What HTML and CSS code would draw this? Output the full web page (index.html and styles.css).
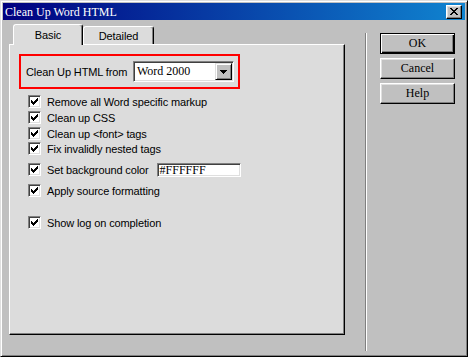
FILE: index.html
```html
<!DOCTYPE html>
<html>
<head>
<meta charset="utf-8">
<link rel="stylesheet" href="styles.css">
</head>
<body>
<div class="window">
  <div class="titlebar">
    <span class="title">Clean Up Word HTML</span>
    <button class="close"><svg width="8" height="7" viewBox="0 0 8 7" shape-rendering="crispEdges"><path d="M0 0h2v1H0zM6 0h2v1H6zM1 1h2v1H1zM5 1h2v1H5zM2 2h4v1H2zM3 3h2v1H3zM2 4h4v1H2zM1 5h2v1H1zM5 5h2v1H5zM0 6h2v1H0zM6 6h2v1H6z" fill="#000"/></svg></button>
  </div>
  <div class="body">
    <div class="left">
      <div class="tabs">
        <div class="tab tab-basic active">Basic</div>
        <div class="tab tab-detailed">Detailed</div>
      </div>
      <div class="panel">
        <div class="highlight">
          <span class="field-label">Clean Up HTML from</span>
          <div class="select">
            <span class="select-value">Word 2000</span>
            <span class="select-btn"><svg width="7" height="4" viewBox="0 0 7 4" shape-rendering="crispEdges"><path d="M0 0h7v1H0zM1 1h5v1H1zM2 2h3v1H2zM3 3h1v1H3z" fill="#000"/></svg></span>
          </div>
        </div>
        <ul class="options">
          <li class="option"><span class="check"><svg width="7" height="7" viewBox="0 0 7 7" shape-rendering="crispEdges"><path d="M6 0h1v1H6zM5 1h2v1H5zM0 2h1v1H0zM4 2h3v1H4zM0 3h2v1H0zM3 3h3v1H3zM0 4h5v1H0zM1 5h3v1H1zM2 6h1v1H2z" fill="#000"/></svg></span><span class="opt-label">Remove all Word specific markup</span></li>
          <li class="option gap-3"><span class="check"><svg width="7" height="7" viewBox="0 0 7 7" shape-rendering="crispEdges"><path d="M6 0h1v1H6zM5 1h2v1H5zM0 2h1v1H0zM4 2h3v1H4zM0 3h2v1H0zM3 3h3v1H3zM0 4h5v1H0zM1 5h3v1H1zM2 6h1v1H2z" fill="#000"/></svg></span><span class="opt-label">Clean up CSS</span></li>
          <li class="option gap-3"><span class="check"><svg width="7" height="7" viewBox="0 0 7 7" shape-rendering="crispEdges"><path d="M6 0h1v1H6zM5 1h2v1H5zM0 2h1v1H0zM4 2h3v1H4zM0 3h2v1H0zM3 3h3v1H3zM0 4h5v1H0zM1 5h3v1H1zM2 6h1v1H2z" fill="#000"/></svg></span><span class="opt-label">Clean up &lt;font&gt; tags</span></li>
          <li class="option gap-2"><span class="check"><svg width="7" height="7" viewBox="0 0 7 7" shape-rendering="crispEdges"><path d="M6 0h1v1H6zM5 1h2v1H5zM0 2h1v1H0zM4 2h3v1H4zM0 3h2v1H0zM3 3h3v1H3zM0 4h5v1H0zM1 5h3v1H1zM2 6h1v1H2z" fill="#000"/></svg></span><span class="opt-label">Fix invalidly nested tags</span></li>
          <li class="option gap-8"><span class="check"><svg width="7" height="7" viewBox="0 0 7 7" shape-rendering="crispEdges"><path d="M6 0h1v1H6zM5 1h2v1H5zM0 2h1v1H0zM4 2h3v1H4zM0 3h2v1H0zM3 3h3v1H3zM0 4h5v1H0zM1 5h3v1H1zM2 6h1v1H2z" fill="#000"/></svg></span><span class="opt-label">Set background color</span><span class="color-input">#FFFFFF</span></li>
          <li class="option gap-8"><span class="check"><svg width="7" height="7" viewBox="0 0 7 7" shape-rendering="crispEdges"><path d="M6 0h1v1H6zM5 1h2v1H5zM0 2h1v1H0zM4 2h3v1H4zM0 3h2v1H0zM3 3h3v1H3zM0 4h5v1H0zM1 5h3v1H1zM2 6h1v1H2z" fill="#000"/></svg></span><span class="opt-label">Apply source formatting</span></li>
          <li class="option gap-19"><span class="check"><svg width="7" height="7" viewBox="0 0 7 7" shape-rendering="crispEdges"><path d="M6 0h1v1H6zM5 1h2v1H5zM0 2h1v1H0zM4 2h3v1H4zM0 3h2v1H0zM3 3h3v1H3zM0 4h5v1H0zM1 5h3v1H1zM2 6h1v1H2z" fill="#000"/></svg></span><span class="opt-label">Show log on completion</span></li>
        </ul>
      </div>
    </div>
    <div class="separator"></div>
    <div class="buttons">
      <button class="btn default">OK</button>
      <button class="btn">Cancel</button>
      <button class="btn">Help</button>
    </div>
  </div>
</div>
</body>
</html>
```

FILE: styles.css
```css
* { box-sizing: border-box; }
html, body { margin: 0; padding: 0; }
body {
  background: #c0c0c0;
  font-family: "Liberation Sans", Arial, sans-serif;
  font-size: 11px;
  letter-spacing: -0.12px;
  color: #000;
}
.window {
  width: 468px;
  height: 357px;
  background: #c0c0c0;
  border: 1px solid;
  border-color: #dfdfdf #000 #000 #dfdfdf;
  box-shadow: inset 1px 1px #fff, inset -1px -1px #808080;
  padding: 2px;
  display: flex;
  flex-direction: column;
}
.titlebar {
  height: 17px;
  flex: none;
  background: linear-gradient(to right, #000080, #1084d0);
  display: flex;
  align-items: center;
  justify-content: space-between;
  padding: 0 3px 0 2px;
  color: #fff;
}
.title {
  font-family: "Liberation Serif", "Times New Roman", serif;
  font-size: 12px;
  letter-spacing: 0;
  line-height: 14px;
  white-space: nowrap;
}
.close {
  width: 16px;
  height: 14px;
  padding: 0;
  background: #c0c0c0;
  border: 1px solid;
  border-color: #fff #000 #000 #fff;
  box-shadow: inset -1px -1px #808080, inset 1px 1px #dfdfdf;
  display: flex;
  align-items: center;
  justify-content: center;
}
.close svg { display: block; }
.body {
  flex: 1;
  display: flex;
  align-items: flex-start;
  padding: 4px 0 0 6px;
}
.left { width: 336px; flex: none; }
.tabs {
  display: flex;
  align-items: flex-end;
  height: 20px;
  padding-left: 4px;
}
.tab {
  height: 18px;
  background: #dcdcdc;
  border: 1px solid;
  border-bottom: 0;
  border-color: #fff #000 transparent #fff;
  border-radius: 3px 3px 0 0;
  box-shadow: inset -1px 0 #808080;
  display: flex;
  align-items: center;
  justify-content: center;
  padding-top: 1px;
}
.tab-basic { width: 70px; }
.tab-detailed { width: 71px; }
.tab.active {
  height: 21px;
  margin-bottom: -1px;
  position: relative;
  z-index: 1;
  padding-top: 0;
}
.panel {
  height: 291px;
  background: #dcdcdc;
  border: 1px solid;
  border-color: #fff #000 #000 #fff;
  box-shadow: inset -1px -1px #808080;
  padding: 9px 0 0 9px;
}
.highlight {
  width: 221px;
  height: 35px;
  border: 2px solid #ff0000;
  display: flex;
  align-items: center;
  padding-left: 5px;
}
.field-label { width: 107px; flex: none; white-space: nowrap; }
.select {
  width: 101px;
  height: 21px;
  background: #fff;
  border: 1px solid;
  border-color: #808080 #fff #fff #808080;
  box-shadow: inset 1px 1px #404040, inset -1px -1px #dfdfdf;
  display: flex;
  align-items: center;
  justify-content: space-between;
  padding: 1px 1px 1px 3px;
}
.select-value {
  font-family: "Liberation Serif", "Times New Roman", serif;
  font-size: 12px;
  letter-spacing: 0;
}
.select-btn {
  width: 17px;
  height: 17px;
  background: #c0c0c0;
  border: 1px solid;
  border-color: #dfdfdf #000 #000 #dfdfdf;
  box-shadow: inset 1px 1px #fff, inset -1px -1px #808080;
  display: flex;
  align-items: center;
  justify-content: center;
}
.select-btn svg, .check svg { display: block; }
.options {
  list-style: none;
  margin: 6px 0 0 0;
  padding: 0 0 0 9px;
}
.option {
  display: flex;
  align-items: center;
  height: 13px;
  white-space: nowrap;
}
.gap-2 { margin-top: 2px; }
.gap-3 { margin-top: 3px; }
.gap-8 { margin-top: 8px; }
.gap-19 { margin-top: 19px; }
.check {
  width: 13px;
  height: 13px;
  flex: none;
  background: #fff;
  border: 1px solid;
  border-color: #808080 #fff #fff #808080;
  box-shadow: inset 1px 1px #404040, inset -1px -1px #dfdfdf;
  display: flex;
  align-items: center;
  justify-content: center;
  margin-right: 6px;
}
.opt-label { line-height: 13px; padding-top: 1px; }
.color-input {
  align-self: flex-start;
  width: 84px;
  height: 14px;
  flex: none;
  margin-left: 8px;
  background: #fff;
  border: 1px solid;
  border-color: #808080 #fff #fff #808080;
  box-shadow: inset 1px 1px #404040, inset -1px -1px #dfdfdf;
  font-family: "Liberation Serif", "Times New Roman", serif;
  font-size: 12px;
  letter-spacing: 0;
  line-height: 12px;
  padding-left: 2px;
}
.separator {
  width: 2px;
  height: 318px;
  flex: none;
  margin: 9px 0 0 20px;
  border-left: 1px solid #808080;
  border-right: 1px solid #fff;
}
.buttons {
  display: flex;
  flex-direction: column;
  gap: 4px;
  margin: 9px 0 0 13px;
}
.btn {
  width: 75px;
  height: 21px;
  padding: 0;
  background: #c0c0c0;
  border: 1px solid;
  border-color: #fff #000 #000 #fff;
  box-shadow: inset -1px -1px #808080, inset 1px 1px #dfdfdf;
  font-family: "Liberation Serif", "Times New Roman", serif;
  font-size: 12px;
  letter-spacing: 0;
  color: #000;
}
.btn.default {
  border-color: #000;
  box-shadow: inset 1px 1px #fff, inset -1px -1px #000, inset -2px -2px #808080;
}
```
